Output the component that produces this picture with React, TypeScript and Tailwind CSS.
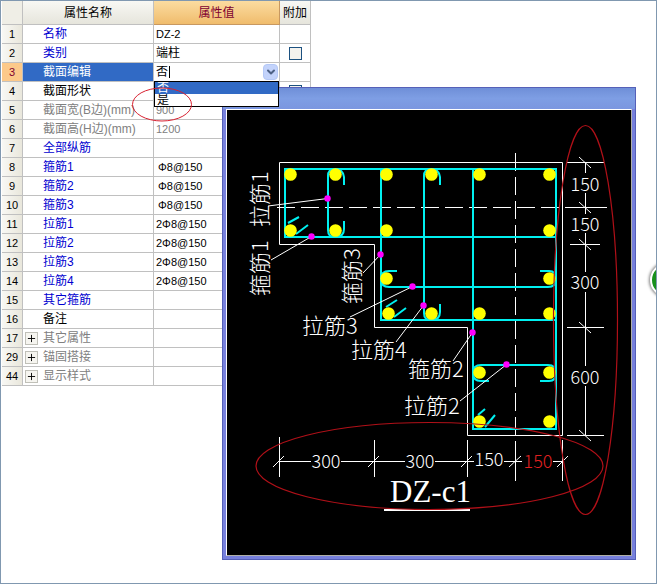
import { useState } from 'react';
import { ChevronDown, Plus } from 'lucide-react';
import { clsx } from 'clsx';

type Tone = 'blue' | 'black' | 'gray';

interface PropertyRow {
  no: number;
  name: string;
  value?: string;
  tone: Tone;
  check?: boolean;
  group?: boolean;
  indent?: boolean;
}

const rows: PropertyRow[] = [
  { no: 1, name: '名称', value: 'DZ-2', tone: 'blue' },
  { no: 2, name: '类别', value: '端柱', tone: 'blue', check: true },
  { no: 3, name: '截面编辑', tone: 'black' },
  { no: 4, name: '截面形状', tone: 'black', check: true },
  { no: 5, name: '截面宽(B边)(mm)', value: '900', tone: 'gray' },
  { no: 6, name: '截面高(H边)(mm)', value: '1200', tone: 'gray' },
  { no: 7, name: '全部纵筋', tone: 'blue' },
  { no: 8, name: '箍筋1', value: 'Φ8@150', tone: 'blue', indent: true },
  { no: 9, name: '箍筋2', value: 'Φ8@150', tone: 'blue', indent: true },
  { no: 10, name: '箍筋3', value: 'Φ8@150', tone: 'blue', indent: true },
  { no: 11, name: '拉筋1', value: '2Φ8@150', tone: 'blue' },
  { no: 12, name: '拉筋2', value: '2Φ8@150', tone: 'blue' },
  { no: 13, name: '拉筋3', value: '2Φ8@150', tone: 'blue' },
  { no: 14, name: '拉筋4', value: '2Φ8@150', tone: 'blue' },
  { no: 15, name: '其它箍筋', tone: 'blue' },
  { no: 16, name: '备注', tone: 'black' },
  { no: 17, name: '其它属性', tone: 'gray', group: true },
  { no: 29, name: '锚固搭接', tone: 'gray', group: true },
  { no: 44, name: '显示样式', tone: 'gray', group: true },
];

const toneClass: Record<Tone, string> = {
  blue: 'text-[#0000d0]',
  black: 'text-black',
  gray: 'text-[#808080]',
};

const OPTIONS = ['否', '是'];

/** Drop-down editor of the "截面编辑" row, shown with its list open */
function SectionEditSelect() {
  const [value, setValue] = useState('否');

  return (
    <div className="relative h-[18px] bg-white">
      <select
        id="section-edit"
        value={value}
        onChange={(e) => setValue(e.target.value)}
        className="block h-full w-full appearance-none bg-white pl-[2px] text-xs leading-4 text-black outline-none"
      >
        {OPTIONS.map((o) => (
          <option key={o}>{o}</option>
        ))}
      </select>
      <span className="pointer-events-none absolute top-[3px] left-[15px] h-3 w-px bg-black" />
      <span className="pointer-events-none absolute top-px right-px flex h-4 w-[15px] items-center justify-center rounded-sm border border-[#b4c8f6] bg-[#c3d3fb] text-[#4d6185]">
        <ChevronDown size={12} strokeWidth={4} />
      </span>
      <ul
        role="listbox"
        aria-label="截面编辑"
        className="absolute top-full left-0 z-20 w-full border border-black bg-white text-xs leading-3"
      >
        {OPTIONS.map((o) => (
          <li
            key={o}
            role="option"
            aria-selected={o === value}
            onClick={() => setValue(o)}
            className={clsx('h-3 overflow-hidden pl-[2px]', o === value ? 'bg-[#316ac5] text-white' : 'text-black')}
          >
            {o}
          </li>
        ))}
      </ul>
    </div>
  );
}

function PropertyTable() {
  return (
    <table className="w-[309px] table-fixed border-separate border-spacing-0 text-xs leading-4 text-black">
      <colgroup>
        <col className="w-[21px]" />
        <col className="w-[131px]" />
        <col className="w-[126px]" />
        <col className="w-[31px]" />
      </colgroup>
      <thead>
        <tr className="h-6 text-center">
          <th className="border-r border-b border-[#c0c0c0] bg-[#efeee6] p-0" />
          <th className="border-r border-b border-[#c0c0c0] bg-linear-to-b from-[#f8f8f4] to-[#e6e5dc] p-0 font-normal">
            属性名称
          </th>
          <th className="border-r border-b border-[#c89860] bg-linear-to-b from-[#fbdca0] to-[#f0bc6c] p-0 font-normal text-[#800030]">
            属性值
          </th>
          <th className="border-r border-b border-[#c0c0c0] bg-linear-to-b from-[#f8f8f4] to-[#e6e5dc] p-0 font-normal">
            附加
          </th>
        </tr>
      </thead>
      <tbody>
        {rows.map((row) => {
          const active = row.no === 3;
          return (
            <tr key={row.no} className="h-[19px]">
              <th
                className={clsx(
                  'border-r border-b border-[#c0c0c0] p-0 text-center text-[11px] font-normal',
                  active ? 'bg-[#fcc98a] text-[#800030]' : 'bg-linear-to-r from-[#f8f8f4] to-[#e9e7dc]'
                )}
              >
                {row.no}
              </th>
              <td
                className={clsx(
                  'border-r border-b border-[#c0c0c0] p-0',
                  active ? 'bg-[#316ac5] text-white' : toneClass[row.tone]
                )}
              >
                <div className="flex items-center whitespace-nowrap">
                  <span className="flex w-5 shrink-0 pl-[2px]">
                    {row.group && (
                      <button
                        type="button"
                        aria-label={`展开${row.name}`}
                        className="flex size-[13px] items-center justify-center border border-[#c0c0b8] bg-[#f6f5f0] text-black"
                      >
                        <Plus size={11} strokeWidth={2} />
                      </button>
                    )}
                  </span>
                  {active ? <label htmlFor="section-edit">{row.name}</label> : row.name}
                </div>
              </td>
              <td
                className={clsx(
                  'border-r border-b border-[#c0c0c0] p-0',
                  row.tone === 'gray' ? 'text-[#808080]' : 'text-black'
                )}
              >
                {active ? (
                  <SectionEditSelect />
                ) : (
                  <div className={clsx(row.indent ? 'pl-1' : 'pl-[2px]', row.no !== 2 && 'text-[11px] leading-4')}>
                    {row.value}
                  </div>
                )}
              </td>
              <td className="border-r border-b border-[#c0c0c0] p-0">
                {row.check && (
                  <input
                    type="checkbox"
                    aria-label={`附加${row.name}`}
                    className="mx-auto block size-[13px] appearance-none border border-[#1c5180] bg-[#f3f2ee]"
                  />
                )}
              </td>
            </tr>
          );
        })}
      </tbody>
    </table>
  );
}

// Longitudinal bars, grouped by row
const bars = [
  { y: 174.5, xs: [290.5, 335.5, 386.5, 431.5, 479.5, 549.5] },
  { y: 230.5, xs: [290.5, 335.5, 386.5, 549.5] },
  { y: 278.5, xs: [386.5, 549.5] },
  { y: 313.5, xs: [388.5, 431.5, 479.5, 549.5] },
  { y: 372.5, xs: [479.5, 549.5] },
  { y: 421.5, xs: [479.5, 549.5] },
];

// Leader lines run from the label to the marker on the stirrup
const leaders = [
  { from: [268, 206], to: [327.5, 198.5] },
  { from: [271, 260], to: [311.5, 236.5] },
  { from: [363, 273], to: [380.5, 254.5] },
  { from: [350, 317], to: [412.5, 286.5] },
  { from: [396, 342], to: [423.5, 305.5] },
  { from: [453, 361], to: [472.5, 332.5] },
  { from: [460, 401], to: [506.5, 364.5] },
];

const labels = [
  { text: '拉筋1', x: 268, y: 227, vertical: true },
  { text: '箍筋1', x: 268, y: 296, vertical: true },
  { text: '箍筋3', x: 360, y: 304, vertical: true },
  { text: '拉筋3', x: 302, y: 334 },
  { text: '拉筋4', x: 351, y: 358 },
  { text: '箍筋2', x: 408, y: 377 },
  { text: '拉筋2', x: 404, y: 414 },
];

const dimensions = [
  { text: '150', x: 585, y: 191 },
  { text: '150', x: 585, y: 231 },
  { text: '300', x: 585, y: 289 },
  { text: '600', x: 585, y: 384 },
  { text: '300', x: 326, y: 468 },
  { text: '300', x: 420, y: 468 },
  { text: '150', x: 489, y: 466 },
  { text: '150', x: 538, y: 468, red: true },
];

function SectionDrawing() {
  return (
    <svg
      viewBox="227 110 404 445"
      role="img"
      aria-label="DZ-c1"
      className="block h-auto w-full bg-black font-['Noto_Sans_CJK_SC',sans-serif] font-light"
    >
      {/* column outline */}
      <path
        d="M279.5 162.5H562.5V435.5H467.5V327.5H374.5V244.5H279.5Z"
        fill="none"
        stroke="#fff"
      />

      {/* centre lines */}
      <g stroke="#fff">
        <path d="M277 207.5H565M515.5 153V435" strokeDasharray="18 6" />
        <path d="M565 207.5H607M515.5 441V481" />
      </g>

      {/* stirrups, ties and their hooks */}
      <g fill="none" stroke="#00f0f0" strokeWidth="2">
        <path d="M285 169H556V237H285Z" />
        <path d="M381 169V320H556" />
        <path d="M473 169V429H556V169" />
        <path d="M344 185V177Q343 169 335 169Q328 169 328 176V230Q328 237 335 237Q344 237 344 229V221" />
        <path d="M440 185V177Q439 169 431 169Q424 169 424 176V313Q424 320 431 320Q440 320 440 312V304" />
        <path d="M397 271H389Q381 271 381 279Q381 287 389 287H548Q556 287 556 279Q556 271 549 271H540" />
        <path d="M489 381H481Q473 381 473 373Q473 365 481 365H548Q556 365 556 373Q556 381 549 381H540" />
        <path d="M288 223L299 217M296 234L308 225" />
        <path d="M386 307L397 300M394 317L406 308" />
        <path d="M478 415L485 409M485 427L495 415" />
      </g>

      {bars.map((row) =>
        row.xs.map((x) => <circle key={`${x}-${row.y}`} cx={x} cy={row.y} r="6.3" fill="#ff0" />)
      )}

      {leaders.map(({ from, to }) => (
        <g key={`${from}`}>
          <path d={`M${from[0]} ${from[1]}L${to[0]} ${to[1]}`} stroke="#fff" />
          <circle cx={to[0]} cy={to[1]} r="3.2" fill="#f0f" />
        </g>
      ))}

      {/* dimension lines, right side */}
      <g stroke="#fff">
        <path d="M567 162.5H604M570 244.5H600M567 327.5H604M567 435.5H604" />
        <path d="M585.5 162V173M585.5 193V214M585.5 233V272M585.5 292V366M585.5 386V435" />
        <path d="M579 157L591 168M579 202L591 213M579 239L591 250M579 322L591 333M579 430L591 441" />
      </g>

      {/* dimension lines, bottom */}
      <g stroke="#fff">
        <path d="M279.5 437V477M374.5 440V477M467.5 440V477M562.5 440V481" />
        <path d="M280 461.5H311M341 461.5H405M435 461.5H474M504 461.5H522M553 461.5H563" />
        <path d="M273 467L284 456M368 467L379 456M461 467L472 456M509 467L521 456M557 467L568 456" />
      </g>

      {dimensions.map((d, i) => (
        <text key={i} x={d.x} y={d.y} fontSize="18" textAnchor="middle" fill={d.red ? '#e02020' : '#fff'}>
          {d.text}
        </text>
      ))}

      {labels.map((l) => (
        <text
          key={l.text}
          transform={`translate(${l.x} ${l.y})${l.vertical ? ' rotate(-90)' : ''}`}
          fontSize="22"
          fill="#fff"
        >
          {l.text}
        </text>
      ))}

      <text x="390" y="502" fontSize="31" fill="#fff" className="font-['Liberation_Serif',serif]">
        DZ-c1
      </text>
      <path d="M384 510H470" stroke="#fff" strokeWidth="2" />

      {/* red markup */}
      <g fill="none" stroke="#b01018" strokeWidth="1.2">
        <ellipse cx="429.5" cy="466" rx="173.5" ry="43.5" />
        <ellipse cx="585.5" cy="320" rx="32" ry="194.5" />
      </g>
    </svg>
  );
}

function PreviewWindow() {
  return (
    <section className="absolute top-[86px] right-5 left-[221px] z-10 border border-[#5560b8] bg-[#7780dc]">
      <header className="h-[21px] bg-linear-to-b from-[#6f8fd8] via-[#7e9ee4] to-[#7b96e0]" />
      <div className="px-[3px] pb-[3px]">
        <div className="border border-t-white border-r-[#b0b0a8] border-b-[#b0b0a8] border-l-white">
          <SectionDrawing />
        </div>
      </div>
    </section>
  );
}

export default function App() {
  return (
    <main className="relative min-h-screen overflow-hidden border border-[#8098b0] bg-white pl-px font-['Liberation_Sans','Noto_Sans_CJK_SC',sans-serif]">
      <PropertyTable />
      <PreviewWindow />

      <svg className="pointer-events-none absolute top-[86px] left-[131px] z-30 h-9 w-[62px]" viewBox="0 0 62 36">
        <ellipse cx="30" cy="17.5" rx="29.5" ry="16.5" fill="none" stroke="#d82030" />
      </svg>

      {/* floating badge cut off by the right edge */}
      <span className="absolute top-[262px] -right-7 size-[34px] rounded-full border-2 border-white bg-[#18901c] shadow-[0_0_3px_1px_#808080]" />
    </main>
  );
}
